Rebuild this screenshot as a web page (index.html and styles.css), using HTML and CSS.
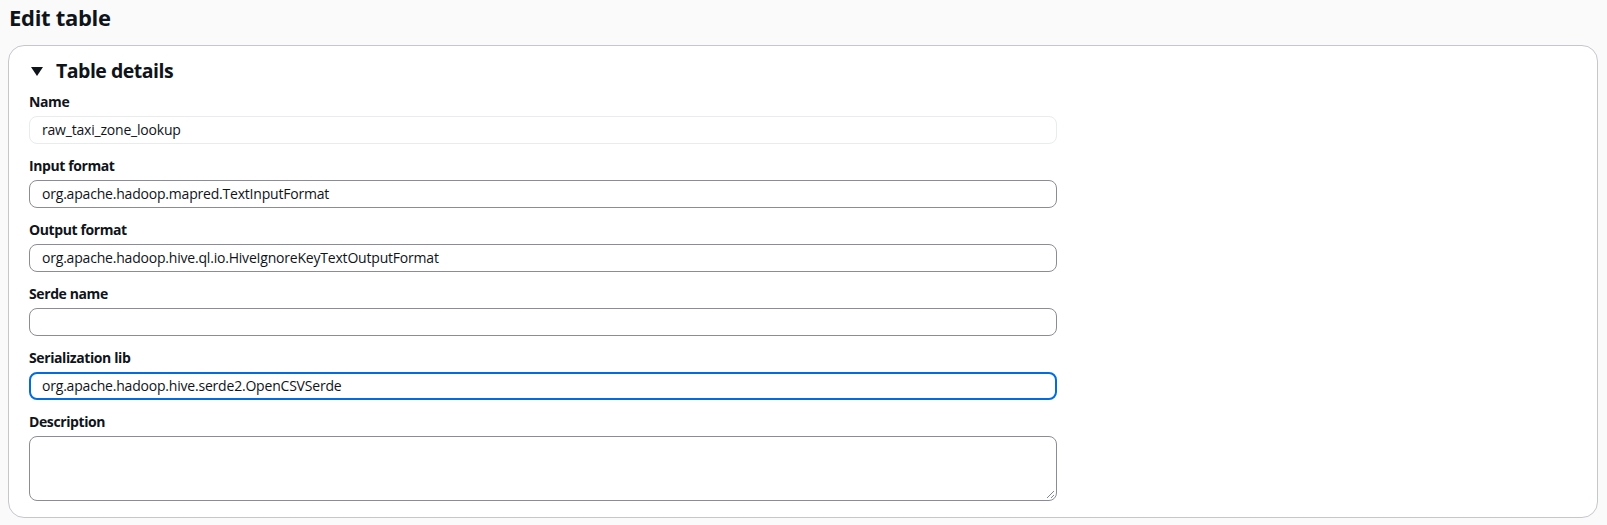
FILE: index.html
```html
<!DOCTYPE html>
<html lang="en">
<head>
<meta charset="utf-8">
<title>Edit table</title>
<link rel="stylesheet" href="styles.css">
</head>
<body>
<main class="page">
  <h1 class="page-title">Edit table</h1>
  <section class="card">
    <h2 class="card-header">
      <svg class="caret" width="14" height="11" viewBox="0 0 14 11" aria-hidden="true"><polygon points="1,1 13,1 7,10" fill="#0f141a"/></svg>
      <span>Table details</span>
    </h2>
    <div class="form">
      <div class="field">
        <label class="label">Name</label>
        <div class="input disabled">raw_taxi_zone_lookup</div>
      </div>
      <div class="field">
        <label class="label">Input format</label>
        <div class="input">org.apache.hadoop.mapred.TextInputFormat</div>
      </div>
      <div class="field">
        <label class="label">Output format</label>
        <div class="input">org.apache.hadoop.hive.ql.io.HiveIgnoreKeyTextOutputFormat</div>
      </div>
      <div class="field">
        <label class="label">Serde name</label>
        <div class="input"></div>
      </div>
      <div class="field">
        <label class="label">Serialization lib</label>
        <div class="input focused">org.apache.hadoop.hive.serde2.OpenCSVSerde</div>
      </div>
      <div class="field">
        <label class="label">Description</label>
        <div class="textarea">
          <svg class="grip" width="9" height="9" viewBox="0 0 9 9" aria-hidden="true"><path d="M8 1 L1 8 M8 5 L5 8" stroke="#7d8998" stroke-width="1"/></svg>
        </div>
      </div>
    </div>
  </section>
</main>
</body>
</html>
```
FILE: styles.css
```css
* { box-sizing: border-box; }
html, body { margin: 0; padding: 0; }
body {
  background: #fafafa;
  font-family: "Open Sans", "Noto Sans", sans-serif;
  color: #0f141a;
}
.page {
  padding: 0 9px 8px 8px;
}
.page-title {
  margin: 0;
  padding: 2px 0 0 1px;
  font-size: 22px;
  line-height: 30px;
  font-weight: 700;
  height: 45px;
  letter-spacing: -0.3px;
}
.card {
  background: #ffffff;
  border: 1px solid #c6c6cd;
  border-radius: 16px;
  padding: 11px 20px 14px 20px;
  height: 473px;
}
.card-header {
  margin: 0;
  display: flex;
  align-items: center;
  gap: 12px;
  font-size: 19.5px;
  line-height: 28px;
  font-weight: 700;
  padding-left: 1px;
  letter-spacing: -0.5px;
}
.caret { flex: none; }
.form {
  width: 1028px;
  display: flex;
  flex-direction: column;
  gap: 11px;
  margin-top: 6px;
}
.field {
  display: flex;
  flex-direction: column;
  gap: 3px;
}
.label {
  font-size: 14px;
  line-height: 22px;
  font-weight: 700;
  letter-spacing: -0.4px;
}
.input {
  height: 28px;
  border: 1px solid #8c8c94;
  border-radius: 8px;
  padding: 0 12px;
  font-size: 14px;
  line-height: 26px;
  background: #ffffff;
  white-space: nowrap;
  letter-spacing: -0.2px;
}
.input.disabled {
  border-color: #e9ebed;
  background: #ffffff;
}
.input.focused {
  border: 2px solid #006ce0;
  padding: 0 11px;
  line-height: 24px;
}
.textarea {
  position: relative;
  height: 65px;
  border: 1px solid #8c8c94;
  border-radius: 8px;
  background: #ffffff;
}
.grip {
  position: absolute;
  right: 1px;
  bottom: 1px;
}
```
